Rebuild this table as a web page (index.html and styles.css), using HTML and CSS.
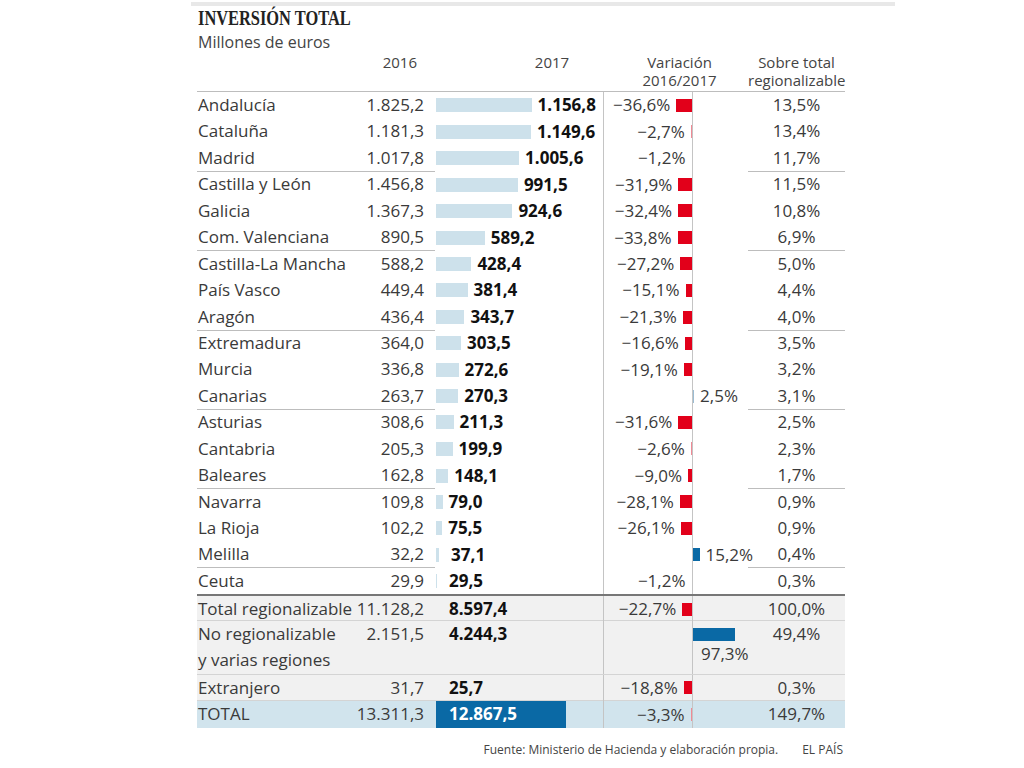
FILE: index.html
```html
<!DOCTYPE html>
<html lang="es">
<head>
<meta charset="utf-8">
<title>Inversión total</title>
<link rel="stylesheet" href="styles.css">
</head>
<body>
<div class="graphic">
  <div class="topbar"></div>
  <h1 class="title">INVERSIÓN TOTAL</h1>
  <div class="subtitle">Millones de euros</div>

  <div class="table">
    <div class="row head">
      <div class="left"><span class="h16">2016</span></div>
      <div class="c17 h17">2017</div>
      <div class="var hvar">Variación<br>2016/2017</div>
      <div class="share hshare">Sobre total<br>regionalizable</div>
    </div>

    <div class="row"><div class="left"><span>Andalucía</span><span>1.825,2</span></div><div class="c17"><i class="bar" style="width:95.6px"></i><b>1.156,8</b></div><div class="var"><div class="neg"><span>−36,6%</span><i class="rbar" style="width:15.7px"></i></div><div class="pos"></div></div><div class="share">13,5%</div></div>
    <div class="row"><div class="left"><span>Cataluña</span><span>1.181,3</span></div><div class="c17"><i class="bar" style="width:95px"></i><b>1.149,6</b></div><div class="var"><div class="neg"><span>−2,7%</span><i class="rbar thin" style="width:1.2px"></i></div><div class="pos"></div></div><div class="share">13,4%</div></div>
    <div class="row grp"><div class="left"><span>Madrid</span><span>1.017,8</span></div><div class="c17"><i class="bar" style="width:83.1px"></i><b>1.005,6</b></div><div class="var"><div class="neg"><span>−1,2%</span><i class="rbar thin" style="width:0.5px"></i></div><div class="pos"></div></div><div class="share">11,7%</div></div>

    <div class="row"><div class="left"><span>Castilla y León</span><span>1.456,8</span></div><div class="c17"><i class="bar" style="width:81.9px"></i><b>991,5</b></div><div class="var"><div class="neg"><span>−31,9%</span><i class="rbar" style="width:13.7px"></i></div><div class="pos"></div></div><div class="share">11,5%</div></div>
    <div class="row"><div class="left"><span>Galicia</span><span>1.367,3</span></div><div class="c17"><i class="bar" style="width:76.4px"></i><b>924,6</b></div><div class="var"><div class="neg"><span>−32,4%</span><i class="rbar" style="width:13.9px"></i></div><div class="pos"></div></div><div class="share">10,8%</div></div>
    <div class="row grp"><div class="left"><span>Com. Valenciana</span><span>890,5</span></div><div class="c17"><i class="bar" style="width:48.7px"></i><b>589,2</b></div><div class="var"><div class="neg"><span>−33,8%</span><i class="rbar" style="width:14.5px"></i></div><div class="pos"></div></div><div class="share">6,9%</div></div>

    <div class="row"><div class="left"><span>Castilla-La Mancha</span><span>588,2</span></div><div class="c17"><i class="bar" style="width:35.4px"></i><b>428,4</b></div><div class="var"><div class="neg"><span>−27,2%</span><i class="rbar" style="width:11.7px"></i></div><div class="pos"></div></div><div class="share">5,0%</div></div>
    <div class="row"><div class="left"><span>País Vasco</span><span>449,4</span></div><div class="c17"><i class="bar" style="width:31.5px"></i><b>381,4</b></div><div class="var"><div class="neg"><span>−15,1%</span><i class="rbar" style="width:6.5px"></i></div><div class="pos"></div></div><div class="share">4,4%</div></div>
    <div class="row grp"><div class="left"><span>Aragón</span><span>436,4</span></div><div class="c17"><i class="bar" style="width:28.4px"></i><b>343,7</b></div><div class="var"><div class="neg"><span>−21,3%</span><i class="rbar" style="width:9.2px"></i></div><div class="pos"></div></div><div class="share">4,0%</div></div>

    <div class="row"><div class="left"><span>Extremadura</span><span>364,0</span></div><div class="c17"><i class="bar" style="width:25.1px"></i><b>303,5</b></div><div class="var"><div class="neg"><span>−16,6%</span><i class="rbar" style="width:7.1px"></i></div><div class="pos"></div></div><div class="share">3,5%</div></div>
    <div class="row"><div class="left"><span>Murcia</span><span>336,8</span></div><div class="c17"><i class="bar" style="width:22.5px"></i><b>272,6</b></div><div class="var"><div class="neg"><span>−19,1%</span><i class="rbar" style="width:8.2px"></i></div><div class="pos"></div></div><div class="share">3,2%</div></div>
    <div class="row grp"><div class="left"><span>Canarias</span><span>263,7</span></div><div class="c17"><i class="bar" style="width:22.3px"></i><b>270,3</b></div><div class="var"><div class="neg"></div><div class="pos"><i class="bbar thin" style="width:1.1px"></i><span>2,5%</span></div></div><div class="share">3,1%</div></div>

    <div class="row"><div class="left"><span>Asturias</span><span>308,6</span></div><div class="c17"><i class="bar" style="width:17.5px"></i><b>211,3</b></div><div class="var"><div class="neg"><span>−31,6%</span><i class="rbar" style="width:13.6px"></i></div><div class="pos"></div></div><div class="share">2,5%</div></div>
    <div class="row"><div class="left"><span>Cantabria</span><span>205,3</span></div><div class="c17"><i class="bar" style="width:16.5px"></i><b>199,9</b></div><div class="var"><div class="neg"><span>−2,6%</span><i class="rbar thin" style="width:1.1px"></i></div><div class="pos"></div></div><div class="share">2,3%</div></div>
    <div class="row grp"><div class="left"><span>Baleares</span><span>162,8</span></div><div class="c17"><i class="bar" style="width:12.2px"></i><b>148,1</b></div><div class="var"><div class="neg"><span>−9,0%</span><i class="rbar" style="width:3.9px"></i></div><div class="pos"></div></div><div class="share">1,7%</div></div>

    <div class="row"><div class="left"><span>Navarra</span><span>109,8</span></div><div class="c17"><i class="bar" style="width:6.5px"></i><b>79,0</b></div><div class="var"><div class="neg"><span>−28,1%</span><i class="rbar" style="width:12.1px"></i></div><div class="pos"></div></div><div class="share">0,9%</div></div>
    <div class="row"><div class="left"><span>La Rioja</span><span>102,2</span></div><div class="c17"><i class="bar" style="width:6.2px"></i><b>75,5</b></div><div class="var"><div class="neg"><span>−26,1%</span><i class="rbar" style="width:11.2px"></i></div><div class="pos"></div></div><div class="share">0,9%</div></div>
    <div class="row grp"><div class="left"><span>Melilla</span><span>32,2</span></div><div class="c17"><i class="bar" style="width:3.1px"></i><b class="far">37,1</b></div><div class="var"><div class="neg"></div><div class="pos"><i class="bbar" style="width:6.5px"></i><span>15,2%</span></div></div><div class="share">0,4%</div></div>

    <div class="row"><div class="left"><span>Ceuta</span><span>29,9</span></div><div class="c17"><i class="bar" style="width:1px"></i><b class="far2">29,5</b></div><div class="var"><div class="neg"><span>−1,2%</span><i class="rbar thin" style="width:0.5px"></i></div><div class="pos"></div></div><div class="share">0,3%</div></div>

    <div class="row sum first"><div class="left"><span>Total regionalizable</span><span>11.128,2</span></div><div class="c17"><b class="nobar">8.597,4</b></div><div class="var"><div class="neg"><span>−22,7%</span><i class="rbar" style="width:9.8px"></i></div><div class="pos"></div></div><div class="share">100,0%</div></div>
    <div class="row sum tall"><div class="left"><span>No regionalizable<br>y varias regiones</span><span>2.151,5</span></div><div class="c17"><b class="nobar">4.244,3</b></div><div class="var"><div class="neg"></div><div class="pos stack"><i class="bbar" style="width:41.8px"></i><span>97,3%</span></div></div><div class="share">49,4%</div></div>
    <div class="row sum"><div class="left"><span>Extranjero</span><span>31,7</span></div><div class="c17"><b class="nobar">25,7</b></div><div class="var"><div class="neg"><span>−18,8%</span><i class="rbar" style="width:8.1px"></i></div><div class="pos"></div></div><div class="share">0,3%</div></div>
    <div class="row total"><div class="left"><span>TOTAL</span><span>13.311,3</span></div><div class="c17"><b class="tbar">12.867,5</b></div><div class="var"><div class="neg"><span>−3,3%</span><i class="rbar thin" style="width:1.4px"></i></div><div class="pos"></div></div><div class="share">149,7%</div></div>
  </div>

  <div class="footer"><span>Fuente: Ministerio de Hacienda y elaboración propia.</span><span>EL PAÍS</span></div>
</div>
</body>
</html>
```

FILE: styles.css
```css
* { box-sizing: border-box; }
html, body { margin: 0; padding: 0; background: #fff; }
body { font-family: "Open Sans", "Liberation Sans", sans-serif; color: #3a3a3a; }

.graphic { width: 704px; margin-left: 191px; padding-top: 2px; }
.topbar { height: 4px; background: #e8e8e8; }

.title {
  margin: 1px 0 0 7px;
  font-family: "Liberation Serif", serif;
  font-weight: bold;
  font-size: 20px;
  line-height: 22px;
  color: #222;
  transform: scaleX(0.82);
  transform-origin: left center;
  white-space: nowrap;
}
.subtitle {
  margin: 2px 0 0 7px;
  font-size: 16px;
  line-height: 22px;
  color: #444;
}

.table { width: 648px; margin-left: 6px; font-size: 17px; }

.row {
  display: grid;
  grid-template-columns: 238px 168px 145px 97px;
  height: 26.44px;
  line-height: 26px;
}
.row > div { min-width: 0; }

.left {
  display: flex;
  justify-content: space-between;
  padding: 0 11px 0 1px;
  white-space: nowrap;
}
.c17 {
  display: flex;
  align-items: center;
  padding-left: 1px;
  white-space: nowrap;
}
.c17 b { font-weight: 700; color: #111; margin-left: 6px; }
.c17 b.far { margin-left: 12px; }
.c17 b.far2 { margin-left: 12px; }
.c17 b.nobar { margin-left: 13px; }
.bar { display: block; height: 14px; background: #cde1eb; flex: none; }

.var {
  display: grid;
  grid-template-columns: 88px 57px;
  border-left: 1px solid #c4c4c4;
}
.neg {
  display: flex;
  justify-content: flex-end;
  align-items: center;
  gap: 6px;
  white-space: nowrap;
}
.pos {
  display: flex;
  align-items: center;
  gap: 6px;
  border-left: 1px solid #c4c4c4;
  white-space: nowrap;
}
.rbar { display: block; height: 13px; background: #e2001a; flex: none; }
.bbar { display: block; height: 13px; background: #0a69a5; flex: none; }
.rbar.thin { background: #ef8a95; }
.bbar.thin { background: #9bbcd3; }

.share { text-align: center; }

.row.grp .left, .row.grp .share { border-bottom: 1px solid #bdbdbd; }

.head { height: 39px; line-height: 18px; font-size: 15px; color: #444; border-bottom: 1px solid #bdbdbd; }
.head .left { justify-content: flex-end; padding-right: 18px; padding-top: 0; }
.head .c17 { display: block; text-align: center; padding-top: 0; padding-left: 66px; }
.head .hvar { display: block; text-align: center; border-left: 0; padding-top: 0; padding-left: 8px; }
.head .hshare { padding-top: 0; }

.sum { background: #f1f1f1; border-bottom: 1px solid #d4d4d4; }
.sum.first { border-top: 2px solid #777; }
.sum.tall { height: 54px; }
.sum.tall .c17, .sum.tall .neg { align-items: flex-start; }
.pos.stack { flex-direction: column; align-items: flex-start; gap: 0; padding-top: 7px; line-height: 18px; }
.pos.stack span { margin-left: 8px; margin-top: 4px; }

.total { background: #d1e4ed; height: 27px; }
.total .tbar {
  display: block;
  width: 130px;
  height: 27px;
  background: #0a69a5;
  color: #fff;
  margin-left: 0;
  padding-left: 13px;
}

.footer {
  display: flex;
  justify-content: flex-end;
  gap: 24px;
  width: 652px;
  margin-top: 13px;
  font-size: 12px;
  color: #444;
}
```
